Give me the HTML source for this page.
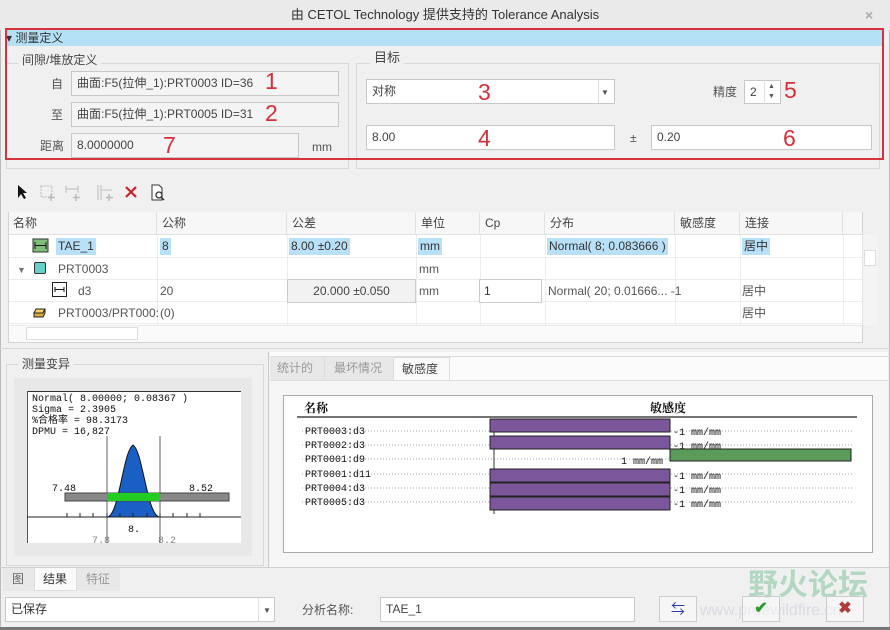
<!DOCTYPE html>
<html><head><meta charset="utf-8"><style>
*{box-sizing:border-box;margin:0;padding:0}
body{width:890px;height:630px;background:#f0f0f0;font-family:"Liberation Sans","Noto Sans CJK SC",sans-serif;font-size:12px;color:#333;position:relative;overflow:hidden}
.a{position:absolute;white-space:nowrap;line-height:14px}
.f{position:absolute;border:1px solid #c8c8c8;background:#f4f4f4;padding-left:5px;line-height:23px;font-size:12px;color:#444}
.w{background:#fff}
.red{position:absolute;color:#d6303a;font-size:23px;line-height:23px}
.grp{position:absolute;border:1px solid #d8d8d8}
.th{position:absolute;top:212px;height:23px;line-height:23px;border-right:1px solid #e2e2e2;padding-left:5px;font-size:12px;color:#444}
.sel{background:#b8e0f7}
</style></head><body>
<div class="a" style="left:0;top:0;width:890px;height:30px;background:#eaeaea;text-align:center;line-height:30px;font-size:13px;color:#333">由 CETOL Technology 提供支持的 Tolerance Analysis</div>
<div class="a" style="left:865px;top:8px;font-size:14px;color:#aaa;font-weight:bold">×</div>
<div class="a" style="left:0;top:30px;width:890px;height:600px;border-left:1px solid #bbb;border-right:1px solid #bbb"></div>
<div class="a" style="left:6px;top:30px;width:877px;height:16px;background:#b5e1f6"></div>
<div class="a" style="left:6px;top:30px;font-size:12px;line-height:16px;color:#333">▾ 测量定义</div>
<div class="grp" style="left:6px;top:63px;width:343px;height:106px"></div>
<div class="a" style="left:18px;top:53px;background:#f0f0f0;padding:0 4px;font-size:12px;color:#444">间隙/堆放定义</div>
<div class="grp" style="left:356px;top:63px;width:524px;height:106px"></div>
<div class="a" style="left:370px;top:51px;background:#f0f0f0;padding:0 4px;font-size:13px;color:#444">目标</div>
<div class="a" style="left:51px;top:77px;color:#555">自</div>
<div class="f" style="left:71px;top:71px;width:268px;height:25px">曲面:F5(拉伸_1):PRT0003 ID=36</div>
<div class="a" style="left:51px;top:108px;color:#555">至</div>
<div class="f" style="left:71px;top:102px;width:268px;height:25px">曲面:F5(拉伸_1):PRT0005 ID=31</div>
<div class="a" style="left:40px;top:139px;color:#555">距离</div>
<div class="f" style="left:71px;top:133px;width:228px;height:25px">8.0000000</div>
<div class="a" style="left:312px;top:140px;color:#555">mm</div>
<div class="f w" style="left:366px;top:79px;width:249px;height:25px">对称</div>
<div class="a" style="left:601px;top:86px;font-size:8px;color:#555">▼</div>
<div class="a" style="left:598px;top:80px;width:1px;height:23px;background:#ddd"></div>
<div class="a" style="left:713px;top:85px;color:#555">精度</div>
<div class="f w" style="left:744px;top:80px;width:37px;height:24px">2</div>
<div class="a" style="left:764px;top:80px;width:1px;height:24px;background:#ddd"></div>
<div class="a" style="left:768px;top:82px;font-size:7px;color:#555;line-height:10px">▲<br>▼</div>
<div class="f w" style="left:366px;top:125px;width:249px;height:25px">8.00</div>
<div class="a" style="left:630px;top:131px;color:#555">±</div>
<div class="f w" style="left:651px;top:125px;width:221px;height:25px">0.20</div>
<div class="red" style="left:265px;top:70px">1</div>
<div class="red" style="left:265px;top:102px">2</div>
<div class="red" style="left:163px;top:134px">7</div>
<div class="red" style="left:478px;top:81px">3</div>
<div class="red" style="left:478px;top:127px">4</div>
<div class="red" style="left:784px;top:79px">5</div>
<div class="red" style="left:783px;top:127px">6</div>
<div class="a" style="left:5px;top:28px;width:879px;height:132px;border:2px solid #d9323f"></div>
<svg class="a" style="left:14px;top:182px" width="160" height="20">
<path d="M4 3 L4 16 L7 12 L10 17 L12 16 L9 11 L13 11 Z" fill="#111"/>
<rect x="27" y="4" width="11" height="11" fill="none" stroke="#bbb" stroke-dasharray="2 1"/><path d="M37 12v7M34 15.5h7" stroke="#bbb" stroke-width="1.5"/>
<path d="M52 4v7M64 4v7M52 7h12" stroke="#bbb"/><path d="M62 12v7M59 15.5h7" stroke="#bbb" stroke-width="1.5"/>
<path d="M84 3v15M87 3v15M88 8h10" stroke="#bbb"/><path d="M95 12v7M92 15.5h7" stroke="#bbb" stroke-width="1.5"/>
<path d="M112 5L122 15M122 5L112 15" stroke="#c8242a" stroke-width="2.2"/>
<path d="M138 3h7l3 3v12h-10z" fill="#fff" stroke="#333"/><circle cx="145" cy="13" r="3" fill="none" stroke="#333" stroke-width="1.3"/><path d="M147 15l3 3" stroke="#333" stroke-width="1.5"/>
</svg>
<div class="a" style="left:8px;top:212px;width:855px;height:131px;background:#fff;border:1px solid #d4d4d4"></div>
<div class="a" style="left:9px;top:212px;width:853px;height:23px;background:#f7f7f7;border-bottom:1px solid #e2e2e2"></div>
<div class="th" style="left:8px;width:149px">名称</div>
<div class="th" style="left:157px;width:130px">公称</div>
<div class="th" style="left:287px;width:129px">公差</div>
<div class="th" style="left:416px;width:64px">单位</div>
<div class="th" style="left:480px;width:65px">Cp</div>
<div class="th" style="left:545px;width:130px">分布</div>
<div class="th" style="left:675px;width:65px">敏感度</div>
<div class="th" style="left:740px;width:103px">连接</div>
<div class="a" style="left:9px;top:257px;width:853px;height:1px;background:#ececec"></div>
<div class="a" style="left:9px;top:279px;width:853px;height:1px;background:#ececec"></div>
<div class="a" style="left:9px;top:301px;width:853px;height:1px;background:#ececec"></div>
<div class="a" style="left:9px;top:323px;width:853px;height:1px;background:#ececec"></div>
<div class="a" style="left:157px;top:235px;width:1px;height:90px;background:#ececec"></div>
<div class="a" style="left:287px;top:235px;width:1px;height:90px;background:#ececec"></div>
<div class="a" style="left:416px;top:235px;width:1px;height:90px;background:#ececec"></div>
<div class="a" style="left:480px;top:235px;width:1px;height:90px;background:#ececec"></div>
<div class="a" style="left:545px;top:235px;width:1px;height:90px;background:#ececec"></div>
<div class="a" style="left:675px;top:235px;width:1px;height:90px;background:#ececec"></div>
<div class="a" style="left:740px;top:235px;width:1px;height:90px;background:#ececec"></div>
<div class="a" style="left:843px;top:235px;width:1px;height:90px;background:#ececec"></div>
<svg class="a" style="left:32px;top:238px" width="18" height="16"><rect x="1" y="1" width="15" height="13" fill="#7dbf7a" stroke="#333"/><path d="M3 7.5h11M3 4v7M14 4v7" stroke="#111"/></svg>
<div class="a sel" style="left:56px;top:238px;padding:0 2px;line-height:17px">TAE_1</div>
<div class="a sel" style="left:160px;top:238px;padding:0 2px;line-height:17px">8</div>
<div class="a sel" style="left:289px;top:238px;padding:0 2px;line-height:17px">8.00 ±0.20</div>
<div class="a sel" style="left:418px;top:238px;padding:0 2px;line-height:17px">mm</div>
<div class="a sel" style="left:547px;top:238px;padding:0 2px;line-height:17px">Normal( 8; 0.083666 )</div>
<div class="a sel" style="left:742px;top:238px;padding:0 2px;line-height:17px">居中</div>
<div class="a" style="left:17px;top:263px;font-size:9px;color:#777">▼</div>
<div class="a" style="left:34px;top:262px;width:12px;height:12px;background:#67d0c9;border:1px solid #333;border-radius:2px"></div>
<div class="a" style="left:58px;top:262px;color:#555">PRT0003</div>
<div class="a" style="left:419px;top:262px;color:#555">mm</div>
<svg class="a" style="left:52px;top:282px" width="16" height="16"><rect x="0.5" y="0.5" width="14" height="14" fill="#fff" stroke="#222"/><path d="M3 7.5h9M3 5v5M12 5v5" stroke="#111"/></svg>
<div class="a" style="left:78px;top:284px;color:#555">d3</div>
<div class="a" style="left:160px;top:284px;color:#555">20</div>
<div class="a" style="left:287px;top:279px;width:129px;height:24px;background:#f2f2f2;border:1px solid #ccc;text-align:center;line-height:22px;color:#444">20.000 ±0.050</div>
<div class="a" style="left:419px;top:284px;color:#555">mm</div>
<div class="a" style="left:479px;top:279px;width:63px;height:24px;border:1px solid #ccc;background:#fff;padding-left:4px;line-height:22px">1</div>
<div class="a" style="left:548px;top:284px;color:#555">Normal( 20; 0.01666... -1</div>
<div class="a" style="left:742px;top:284px;color:#555">居中</div>
<svg class="a" style="left:32px;top:305px" width="18" height="14"><path d="M4 4h9l-2 4h-9z" fill="#f5d36a" stroke="#222"/><path d="M2 8h9l2-4v4l-2 4h-9z" fill="#d9a93a" stroke="#222"/></svg>
<div class="a" style="left:58px;top:306px;color:#555">PRT0003/PRT000:</div>
<div class="a" style="left:160px;top:306px;color:#555">(0)</div>
<div class="a" style="left:742px;top:306px;color:#555">居中</div>
<div class="a" style="left:9px;top:325px;width:853px;height:17px;background:#fafafa;border-top:1px solid #e8e8e8"></div>
<div class="a" style="left:26px;top:327px;width:112px;height:13px;border:1px solid #ddd;background:#fff"></div>
<div class="a" style="left:862px;top:235px;width:16px;height:90px;background:#f4f4f4;border-left:1px solid #e4e4e4"></div>
<div class="a" style="left:864px;top:250px;width:12px;height:16px;background:#fff;border:1px solid #ddd"></div>
<div class="a" style="left:0;top:348px;width:890px;height:1px;background:#d8d8d8"></div>
<div class="grp" style="left:6px;top:364px;width:258px;height:202px"></div>
<div class="a" style="left:18px;top:357px;background:#f0f0f0;padding:0 4px;color:#444">测量变异</div>
<div class="a" style="left:14px;top:378px;width:238px;height:178px;background:#e8e8e8"></div>
<svg class="a" style="left:27px;top:391px" width="214" height="152" viewBox="0 0 214 152">
<rect width="214" height="152" fill="#fff"/>
<path d="M0 0.5H214" stroke="#333"/><path d="M0.5 0V152" stroke="#555"/>
<g font-family="Liberation Mono,Noto Sans CJK SC,monospace" font-size="10" fill="#111">
<text x="5" y="10">Normal( 8.00000; 0.08367 )</text>
<text x="5" y="21">Sigma  = 2.3905</text>
<text x="5" y="32">%合格率 = 98.3173</text>
<text x="5" y="43">DPMU   = 16,827</text>
<text x="25" y="100">7.48</text><text x="162" y="100">8.52</text>
<text x="101" y="141">8.</text>
<text x="65" y="152" fill="#888">7.8</text><text x="131" y="152" fill="#888">8.2</text>
</g>
<path d="M80 45V152M133 45V152" stroke="#666"/>
<path d="M80 126 C92 126 96 60 106 54 C116 60 120 126 133 126Z" fill="#1a5fc4" stroke="#111"/>
<rect x="38" y="102" width="164" height="8" fill="#888" stroke="#444"/>
<rect x="80" y="102" width="53" height="8" fill="#22cc22"/>
<path d="M0 126H214" stroke="#222"/>
<path d="M40 122v4M53 122v4M66 122v4M80 122v4M93 122v4M106 122v4M120 122v4M133 122v4M146 122v4M160 122v4M173 122v4" stroke="#222"/>
</svg>
<div class="a" style="left:268px;top:352px;width:1px;height:216px;background:#ccc"></div>
<div class="a" style="left:270px;top:352px;width:618px;height:28px;background:#fbfbfb"></div>
<div class="a" style="left:270px;top:356px;width:620px;height:1px;background:#ddd"></div>
<div class="a" style="left:270px;top:357px;width:55px;height:23px;background:#e8e8e8;border-right:1px solid #ddd;line-height:23px;padding-left:7px;color:#999">统计的</div>
<div class="a" style="left:325px;top:357px;width:68px;height:23px;background:#e8e8e8;line-height:23px;padding-left:9px;color:#999">最坏情况</div>
<div class="a" style="left:393px;top:357px;width:57px;height:24px;background:#fafafa;border:1px solid #ddd;border-bottom:none;line-height:23px;padding-left:8px;color:#444">敏感度</div>
<div class="a" style="left:270px;top:380px;width:618px;height:188px;background:#f6f6f6;border-top:1px solid #ddd"></div>
<div class="a" style="left:283px;top:395px;width:590px;height:158px;background:#fff;border:1px solid #aaa"></div>
<svg class="a" style="left:284px;top:396px" width="588" height="156">
<g font-family="Liberation Serif,Noto Serif CJK SC,serif" font-size="12" font-weight="bold" fill="#111"><text x="20" y="16">名称</text><text x="366" y="16">敏感度</text></g>
<path d="M13 21H573" stroke="#222" stroke-width="1.3"/>
<g stroke="#aaa" stroke-dasharray="1 2"><path d="M18 35H570M18 49H570M18 63H570M18 78H570M18 92H570M18 106H570"/></g>
<g font-family="Liberation Mono,monospace" font-size="10" fill="#111">
<text x="21" y="38">PRT0003:d3</text><text x="21" y="52">PRT0002:d3</text><text x="21" y="66">PRT0001:d9</text><text x="21" y="81">PRT0001:d11</text><text x="21" y="95">PRT0004:d3</text><text x="21" y="109">PRT0005:d3</text>
<text x="389" y="39">-1 mm/mm</text><text x="389" y="53">-1 mm/mm</text><text x="337" y="68">1 mm/mm</text><text x="389" y="83">-1 mm/mm</text><text x="389" y="97">-1 mm/mm</text><text x="389" y="111">-1 mm/mm</text>
</g>
<path d="M210 23V118" stroke="#333"/>
<g fill="#7b569a" stroke="#222"><rect x="206" y="23" width="180" height="13"/><rect x="206" y="40" width="180" height="13"/><rect x="206" y="73" width="180" height="13"/><rect x="206" y="87" width="180" height="13"/><rect x="206" y="101" width="180" height="13"/></g>
<rect x="386" y="53" width="181" height="12" fill="#5a9a5a" stroke="#222"/>
</svg>
<div class="a" style="left:0;top:567px;width:890px;height:1px;background:#d0d0d0"></div>
<div class="a" style="left:3px;top:568px;width:31px;height:23px;background:#e8e8e8;line-height:22px;padding-left:9px;color:#666">图</div>
<div class="a" style="left:34px;top:568px;width:43px;height:23px;background:#fafafa;border:1px solid #ddd;border-top:none;line-height:22px;padding-left:8px;color:#333">结果</div>
<div class="a" style="left:77px;top:568px;width:43px;height:23px;background:#e8e8e8;line-height:22px;padding-left:9px;color:#999">特征</div>
<div class="f w" style="left:5px;top:597px;width:270px;height:25px;color:#333">已保存</div>
<div class="a" style="left:258px;top:598px;width:1px;height:23px;background:#ddd"></div>
<div class="a" style="left:263px;top:604px;font-size:8px;color:#555">▼</div>
<div class="a" style="left:302px;top:603px;color:#555">分析名称:</div>
<div class="f w" style="left:380px;top:597px;width:255px;height:25px">TAE_1</div>
<div class="a" style="left:748px;top:565px;font-size:30px;line-height:34px;color:#8dc7a4;font-family:'Noto Sans CJK SC',sans-serif;font-weight:bold;opacity:.6">野火论坛</div>
<div class="a" style="left:700px;top:602px;font-size:16px;line-height:18px;color:#ccd;opacity:.6">www.proewildfire.cn</div>
<div class="a" style="left:659px;top:596px;width:38px;height:26px;border:1px solid #ccc;background:rgba(255,255,255,.4);text-align:center;line-height:24px;font-size:14px;color:#2a3cb0">⇆</div>
<div class="a" style="left:742px;top:596px;width:38px;height:26px;border:1px solid #ccc;background:rgba(255,255,255,.4);text-align:center;line-height:24px;font-size:16px;color:#2c9a2c;font-weight:bold">✔</div>
<div class="a" style="left:826px;top:596px;width:38px;height:26px;border:1px solid #ccc;background:rgba(255,255,255,.4);text-align:center;line-height:24px;font-size:16px;color:#b23a3a;font-weight:bold">✖</div>
<div class="a" style="left:0;top:627px;width:890px;height:3px;background:#777"></div>
</body></html>
